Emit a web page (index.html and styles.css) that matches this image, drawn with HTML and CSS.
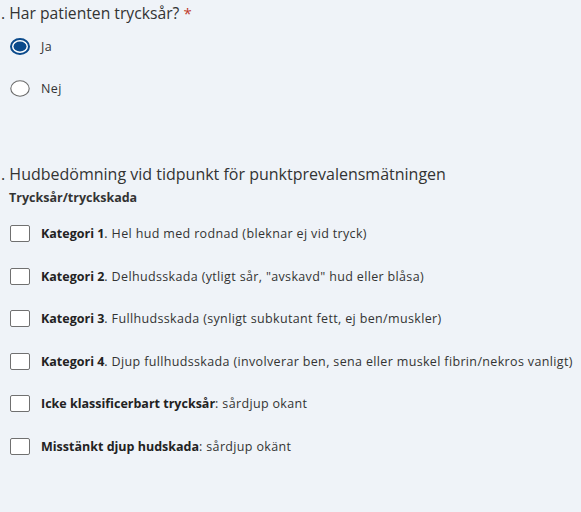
FILE: index.html
```html
<!DOCTYPE html>
<html lang="sv">
<head>
<meta charset="utf-8">
<link rel="stylesheet" href="styles.css">
</head>
<body>
<div class="page">
  <section class="question q1">
    <h2 class="q-title"><span class="num">.</span> Har patienten trycksår? <span class="req">*</span></h2>
    <div class="options">
      <label class="opt">
        <svg class="radio" width="20" height="17" viewBox="0 0 20 17"><ellipse cx="10" cy="8.5" rx="9" ry="7.5" fill="#fff" stroke="#0b4a8b" stroke-width="2"/><ellipse cx="10" cy="8.5" rx="6.5" ry="5" fill="#0b4a8b"/></svg>
        <span class="lbl">Ja</span>
      </label>
      <label class="opt">
        <svg class="radio" width="20" height="17" viewBox="0 0 20 17"><ellipse cx="10" cy="8.5" rx="9.2" ry="7.7" fill="#fff" stroke="#6b6b6b" stroke-width="1.1"/></svg>
        <span class="lbl">Nej</span>
      </label>
    </div>
  </section>

  <section class="question q2">
    <h2 class="q-title"><span class="num">.</span> Hudbedömning vid tidpunkt för punktprevalensmätningen</h2>
    <div class="sub">Trycksår/tryckskada</div>
    <div class="options checks">
      <label class="opt"><span class="box"></span><span class="lbl"><b>Kategori 1</b>. Hel hud med rodnad (bleknar ej vid tryck)</span></label>
      <label class="opt"><span class="box"></span><span class="lbl"><b>Kategori 2</b>. Delhudsskada (ytligt sår, "avskavd" hud eller blåsa)</span></label>
      <label class="opt"><span class="box"></span><span class="lbl"><b>Kategori 3</b>. Fullhudsskada (synligt subkutant fett, ej ben/muskler)</span></label>
      <label class="opt"><span class="box"></span><span class="lbl"><b>Kategori 4</b>. Djup fullhudsskada (involverar ben, sena eller muskel fibrin/nekros vanligt)</span></label>
      <label class="opt"><span class="box"></span><span class="lbl"><b>Icke klassificerbart trycksår</b>: sårdjup okant</span></label>
      <label class="opt"><span class="box"></span><span class="lbl"><b>Misstänkt djup hudskada</b>: sårdjup okänt</span></label>
    </div>
  </section>
</div>
</body>
</html>
```

FILE: styles.css
```css
html, body {
  margin: 0;
  padding: 0;
  background: #eff3f8;
}
body {
  font-family: "Open Sans", Lato, sans-serif;
  color: #2b2b2b;
  overflow: hidden;
}
.page {
  padding: 0 0 0 10px;
}
.question {
  display: flex;
  flex-direction: column;
}
.q-title {
  margin: 0 0 0 -9px;
  font-size: 16px;
  font-weight: 400;
  line-height: 26px;
  color: #333;
  white-space: nowrap;
}
.q1 .q-title {
  font-size: 15.7px;
}
.req {
  color: #c0392b;
  font-size: 15px;
}
.options {
  display: flex;
  flex-direction: column;
}
.q1 .options {
  margin-top: 12px;
  gap: 25px;
}
.opt {
  display: flex;
  align-items: center;
  gap: 11px;
  height: 17px;
  font-size: 12.5px;
  color: #333;
}
.radio {
  flex: none;
  display: block;
}
.q2 {
  margin-top: 64px;
}
.sub {
  font-size: 12.5px;
  font-weight: 700;
  color: #333;
  line-height: 16px;
  margin-top: 3px;
  margin-left: -1px;
}
.checks {
  margin-top: 19px;
  gap: 25.5px;
}
.box {
  flex: none;
  width: 18px;
  height: 15px;
  background: #fff;
  border: 1px solid #707070;
  border-radius: 2px;
}
.lbl {
  white-space: nowrap;
  letter-spacing: 0.35px;
}
.lbl b {
  font-weight: 700;
  color: #222;
  letter-spacing: 0;
}
```
